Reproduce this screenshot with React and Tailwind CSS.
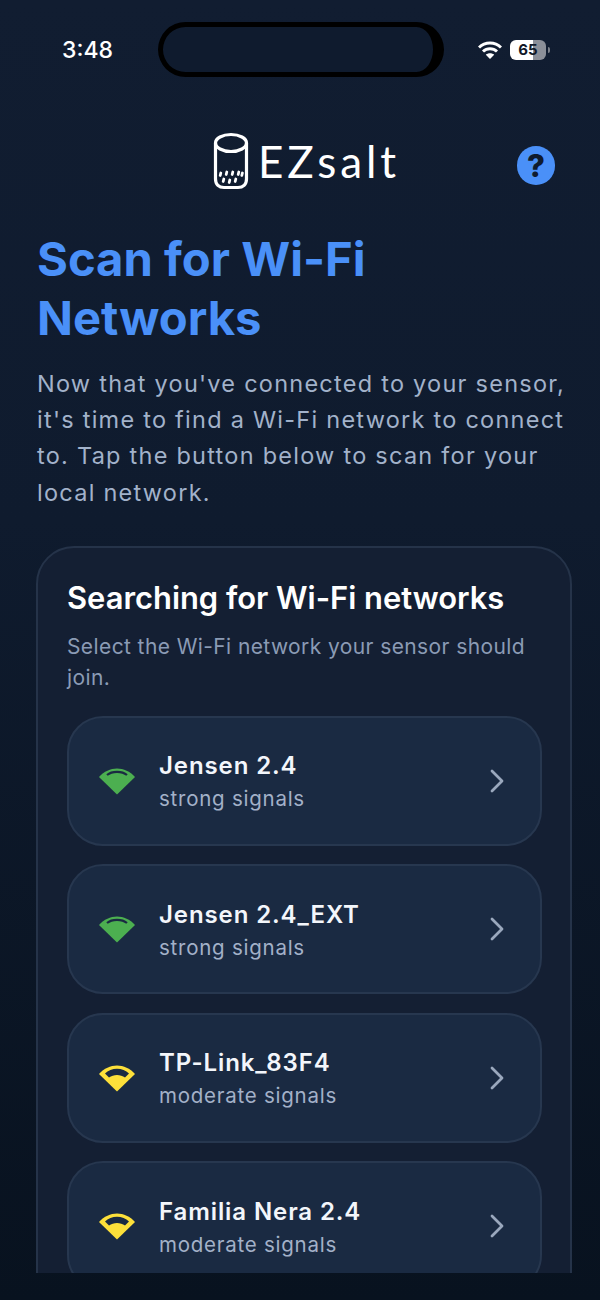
import React from 'react';

const networks = [
  { name: 'Jensen 2.4', level: 'strong', color: '#4caf50' },
  { name: 'Jensen 2.4_EXT', level: 'strong', color: '#4caf50' },
  { name: 'TP-Link_83F4', level: 'moderate', color: '#fde03a' },
  { name: 'Familia Nera 2.4', level: 'moderate', color: '#fde03a' },
];

// Wedge with a dark slot: thin for strong signal, wider for moderate
const SignalIcon = ({ color, level }) => (
  <svg width="38" height="28" viewBox="0 0 38 28" className="shrink-0">
    <path d="M1 10 C11 -1.5 27 -1.5 37 10 L19 27.5 Z" fill={color} />
    {level === 'strong' ? (
      <path d="M9 8 C14 3.8 24 3.8 29 8" fill="none" stroke="#1a2a42" strokeWidth="2.2" />
    ) : (
      <path d="M7 9.5 C13 3 25 3 31 9.5 L27 13.5 C22.5 10 15.5 10 11 13.5 Z" fill="#1a2a42" />
    )}
  </svg>
);

const LogoMark = () => (
  <svg width="38" height="58" viewBox="0 0 38 58" fill="none" stroke="white" strokeWidth="3.2" className="shrink-0">
    <ellipse cx="19" cy="11" rx="15.5" ry="8.5" />
    <path d="M3.5 11 V47 C3.5 52.5 7 55.5 12 55.5 H26 C31 55.5 34.5 52.5 34.5 47 V11" strokeLinecap="round" />
    <g strokeWidth="2.8" strokeLinecap="round">
      <path d="M8.8 41 L8.2 43.5" />
      <path d="M14.8 40 L14.2 42.5" />
      <path d="M20.8 40 L20.2 42.5" />
      <path d="M26.8 40 L26.2 42.5" />
      <path d="M30.4 41 L29.8 43.5" />
      <path d="M11.8 47 L11.2 49.5" />
      <path d="M17.8 48 L17.2 50.5" />
      <path d="M23.8 47 L23.2 49.5" />
    </g>
  </svg>
);

const StatusBar = () => (
  <div className="flex h-[55px] items-center pl-[62px]">
    <span className="mt-[2px] w-[96px] text-[23px] font-medium leading-none text-white">3:48</span>
    <div className="h-[55px] w-[286px] rounded-[28px] border-[5px] border-r-[11px] border-black bg-[#0f1b2e]" />
    <div className="ml-[34px] flex w-[72px] items-center gap-[8px]">
      <svg width="24" height="18" viewBox="0 0 24 18" className="shrink-0">
        <path d="M1 6.5 C7 0.5 17 0.5 23 6.5" fill="none" stroke="white" strokeWidth="3" />
        <path d="M5 10.5 C9 6.8 15 6.8 19 10.5" fill="none" stroke="white" strokeWidth="3" />
        <path d="M12 18 L7.8 13.8 C10 11.8 14 11.8 16.2 13.8 Z" fill="white" />
      </svg>
      <div className="flex h-[20px] w-[37px] items-center justify-center rounded-[6px] bg-[linear-gradient(90deg,#ffffff_0%,#ffffff_65%,#8b8f98_65%,#8b8f98_100%)] text-[15px] font-bold leading-none text-[#111827]">
        65
      </div>
      <div className="-ml-[6px] h-[6px] w-[2px] rounded-r-full bg-[#7b808a]" />
    </div>
  </div>
);

export default function App() {
  return (
    <div className="h-[1300px] w-[600px] overflow-hidden bg-[linear-gradient(180deg,#111d31_0%,#0f1b2e_40%,#08121f_100%)] font-['Inter',sans-serif]">
      <div className="h-[1273px] overflow-hidden pt-[22px]">
        <StatusBar />

        {/* Brand row */}
        <div className="relative mt-[55px] flex h-[58px] items-center pl-[212px]">
          <div className="flex items-center gap-[8px]">
            <LogoMark />
            <span className="font-['Lato',sans-serif] text-[44px] font-normal leading-none tracking-[3.9px] text-white">EZsalt</span>
          </div>
          <div className="absolute left-[517px] top-[14px] flex h-[39px] w-[38px] items-center justify-center rounded-full bg-[#4a90f8] text-[31px] font-extrabold leading-none text-[#0f1b2e]">
            ?
          </div>
        </div>

        <div className="pl-[37px]">
          <h1 className="mt-[39px] text-[47.2px] font-bold leading-[59px] text-[#4a90f8]">
            Scan for Wi-Fi
            <br />
            Networks
          </h1>
          <p className="mt-[19px] w-[535px] text-[23.5px] leading-[36.2px] tracking-[1.25px] text-[#a2b2ca]">
            Now that you've connected to your sensor, it's time to find a Wi-Fi network to connect to. Tap the button below to scan for your local network.
          </p>

          <div className="-ml-px mt-[35px] w-[536px] rounded-[38px] border-2 border-[#253349] bg-[#141f33] pb-[40px] pl-[29px] pr-[28px] pt-[30px]">
            <h2 className="text-[30.9px] font-semibold leading-[40px] text-white">Searching for Wi-Fi networks</h2>
            <p className="mt-[13px] text-[21px] leading-[31px] tracking-[0.4px] text-[#8b9bb5]">
              Select the Wi-Fi network your sensor should join.
            </p>
            <div className="mt-[23px] flex flex-col gap-[18.5px]">
              {networks.map((net) => (
                <div
                  key={net.name}
                  className="flex h-[130px] items-center rounded-[36px] border-2 border-[#27374f] bg-[#1a2a42] pl-[29px] pr-[35px]"
                >
                  <SignalIcon color={net.color} level={net.level} />
                  <div className="ml-[23px] flex-1 pt-[4px]">
                    <div className="text-[24px] font-semibold leading-[32px] tracking-[0.9px] text-[#f3f6fb]">{net.name}</div>
                    <div className="mt-[1px] text-[20.5px] leading-[32px] tracking-[0.75px] text-[#a3b1c8]">{net.level} signals</div>
                  </div>
                  <svg width="16" height="26" viewBox="0 0 16 26" fill="none" stroke="#9aa8bd" strokeWidth="2.8" strokeLinecap="round" strokeLinejoin="round" className="shrink-0">
                    <path d="M3 3 L13 13 L3 23" />
                  </svg>
                </div>
              ))}
            </div>
          </div>
        </div>
      </div>
    </div>
  );
}
